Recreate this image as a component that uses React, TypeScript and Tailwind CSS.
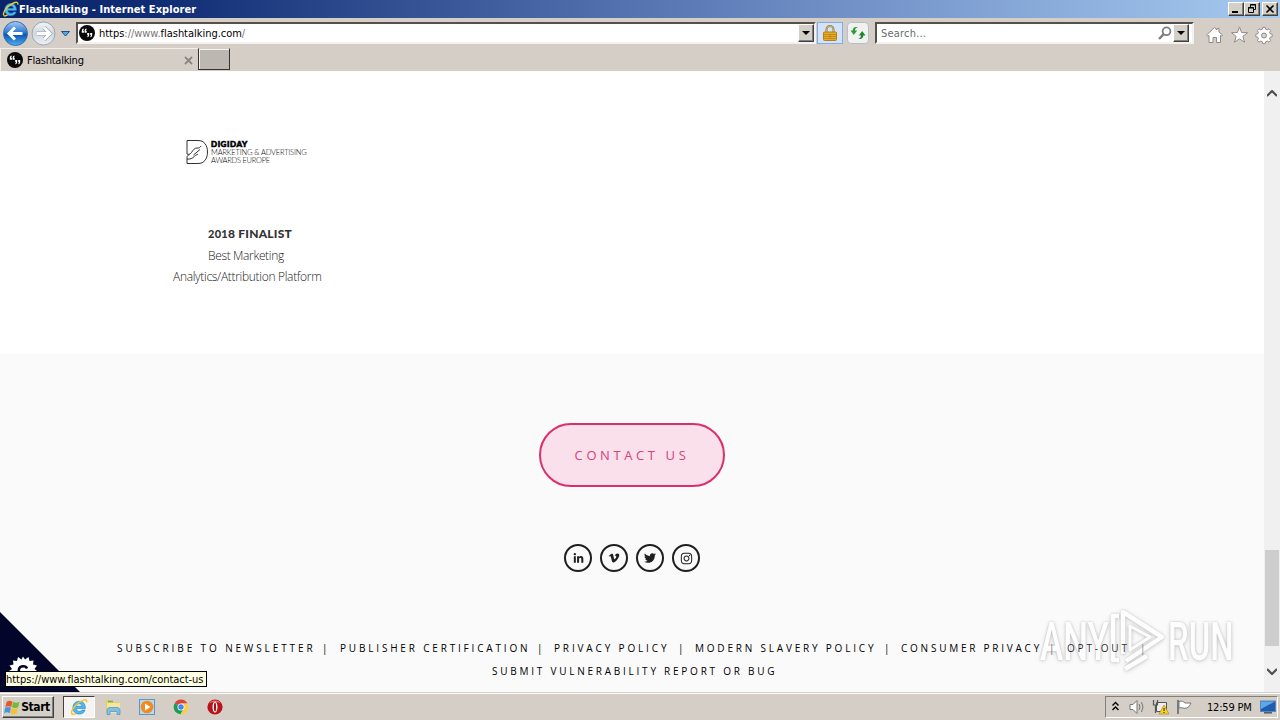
import React from "react";
import { FaLinkedinIn, FaVimeoV, FaTwitter, FaInstagram } from "react-icons/fa";

const UI = "font-['DejaVu_Sans_Condensed','DejaVu_Sans',sans-serif] whitespace-nowrap";

function IELogo({ className }: { className: string }) {
  return (
    <svg viewBox="0 0 18 18" className={className}>
      <path d="M15.300 10.600H6.200c.2 2 1.500 2.800 3.300 2.800 1.300 0 2.100-.5 2.600-1.300h2.900c-.8 2.600-2.900 4-5.700 4-3.800 0-6.400-2.600-6.400-6.400 0-3.700 2.600-6.500 6.400-6.500 4 0 6.200 2.900 6 7.400zM6.300 8.300h5.700c-.2-1.700-1.200-2.500-2.700-2.500-1.700 0-2.700.9-3 2.500z" fill="#4fb8f0" stroke="#1c78bd" strokeWidth=".6" />
      <path d="M16.700 4.500c.5-2.200-.8-3.200-3.200-2.400C8.500 3.700 2.500 9.500 1.600 13.700c-.6 3 1.400 3.300 4.400 1.600" fill="none" stroke="#f2c62c" strokeWidth="1.500" />
    </svg>
  );
}

function QuoteMark({ className }: { className: string }) {
  return (
    <svg viewBox="0 0 16 16" className={className}>
      <circle cx="8" cy="8" r="8" fill="#080808" />
      <path d="M2.800 7.800V6c0-1.400.7-2.200 1.900-2.400v1.200c-.4.200-.6.400-.6.900h.8v2.100zM5.600 7.800V6c0-1.400.7-2.200 1.900-2.400v1.200c-.4.200-.6.400-.6.900h.8v2.100zM8.200 8h2v1.800c0 1.400-.6 2.200-1.800 2.500v-1.200c.3-.2.500-.4.500-1h-.7zM11.200 8h2v1.800c0 1.400-.6 2.200-1.800 2.500v-1.200c.3-.2.500-.4.500-1h-.7z" fill="#fff" />
    </svg>
  );
}

function RaisedButton({ children, className }: { children: React.ReactNode; className: string }) {
  return (
    <div className={`flex shrink-0 items-center justify-center border border-t-white border-l-white border-r-[#404040] border-b-[#404040] bg-[#d4d0c8] shadow-[inset_-1px_-1px_0_#808080] ${className}`}>
      {children}
    </div>
  );
}

function DropArrow() {
  return (
    <svg viewBox="0 0 8 4" className="h-1 w-2">
      <path d="M0 0h8L4 4z" fill="#000" />
    </svg>
  );
}

function TitleBar() {
  return (
    <div className="flex h-[18px] shrink-0 items-center bg-[linear-gradient(90deg,#0a246a_0%,#0f2c74_12%,#6483bd_58%,#a6caf0_100%)] pl-[2px] pr-[2px]">
      <IELogo className="h-[18px] w-[17px]" />
      <span className="whitespace-nowrap pt-[2px] font-['DejaVu_Sans_Condensed','DejaVu_Sans',sans-serif] text-[11px] font-bold tracking-[0.05px] text-white">
        Flashtalking - Internet Explorer
      </span>
      <div className="ml-auto flex">
        <RaisedButton className="h-[14px] w-4">
          <svg viewBox="0 0 12 10" className="h-[10px] w-3"><path d="M2 7h6v2H2z" /></svg>
        </RaisedButton>
        <RaisedButton className="h-[14px] w-4">
          <svg viewBox="0 0 12 10" className="h-[10px] w-3" fill="none" stroke="#000"><path d="M4.500 3.500v-3h5v5h-2M4 1h6M2.500 3.500h5v5h-5zM2 4h6" /></svg>
        </RaisedButton>
        <RaisedButton className="ml-[2px] h-[14px] w-4">
          <svg viewBox="0 0 12 10" className="h-[10px] w-3"><path d="M2.500 1.500l7 7M9.500 1.500l-7 7" stroke="#000" strokeWidth="1.600" /></svg>
        </RaisedButton>
      </div>
    </div>
  );
}

function NavButtons() {
  return (
    <svg viewBox="0 0 76 30" className="h-[30px] w-[76px] shrink-0">
      <defs>
        <linearGradient id="back" x1="0" y1="0" x2="0" y2="1">
          <stop offset="0" stopColor="#a9cdf2" />
          <stop offset=".45" stopColor="#2f79d0" />
          <stop offset=".55" stopColor="#0c55b5" />
          <stop offset="1" stopColor="#4cb0f0" />
        </linearGradient>
        <linearGradient id="fwd" x1="0" y1="0" x2="0" y2="1">
          <stop offset="0" stopColor="#f4f6f8" />
          <stop offset=".5" stopColor="#cfd6df" />
          <stop offset="1" stopColor="#f0f3f6" />
        </linearGradient>
      </defs>
      <circle cx="15.500" cy="15.500" r="12" fill="url(#back)" stroke="#3a6eae" />
      <path d="M15 9.500l-6 6 6 6M9.500 15.500h13" fill="none" stroke="#fff" strokeWidth="3" />
      <circle cx="43.500" cy="15.500" r="11.500" fill="url(#fwd)" stroke="#9aa5b4" />
      <path d="M44 9.500l6 6-6 6M49.500 15.500h-13" fill="none" stroke="#98a1ae" strokeWidth="4" />
      <path d="M44 9.500l6 6-6 6M49.500 15.500h-13" fill="none" stroke="#fff" strokeWidth="2.800" />
      <path d="M61.500 13.500h8l-4 4.500z" fill="#53a9e0" stroke="#1b4f8c" />
    </svg>
  );
}

function AddressRow() {
  return (
    <div className="flex h-[30px] shrink-0 items-start">
      <NavButtons />
      <div className="mt-1 flex h-[22px] w-[740px] shrink-0 items-center border-2 border-t-[#55504c] border-l-[#55504c] border-r-[#f4f2ef] border-b-[#f4f2ef] bg-white pl-px">
        <QuoteMark className="h-4 w-4" />
        <span className={`${UI} ml-1 pt-[3px] text-[11px] tracking-[-0.03px] text-[#777]`}>
          <span className="text-black">https</span>://www.<span className="text-black">flashtalking.com</span>/
        </span>
        <RaisedButton className="ml-auto h-[18px] w-4">
          <DropArrow />
        </RaisedButton>
      </div>
      <div className="ml-px mt-1 flex h-[22px] w-[26px] shrink-0 items-center justify-center border border-[#7fadea] bg-[#d2e3fb]">
        <svg viewBox="0 0 14 16" className="h-4 w-[14px]">
          <path d="M3.500 8V4.500a3.500 3.500 0 0 1 7 0V8" fill="none" stroke="#99742c" strokeWidth="2" />
          <path d="M3.500 8V4.500a3.500 3.500 0 0 1 7 0V8" fill="none" stroke="#e8d28c" strokeWidth=".7" />
          <rect x=".5" y="7" width="13" height="8.500" rx="1" fill="#e5ab25" stroke="#b67e15" />
          <path d="M1 9.500h12M1 11.500h12M1 13.500h12M7 9v5" stroke="#bd8418" strokeWidth=".8" />
        </svg>
      </div>
      <div className="ml-1 mt-1 flex h-[22px] w-[22px] shrink-0 items-center justify-center rounded-sm border border-[#b4bfcb] bg-[#f0f2f1]">
        <svg viewBox="0 0 16 14" className="h-[14px] w-4">
          <path d="M8 1.500C5.600 1.500 5 3 5 4.500h2.200L3.800 9 .5 4.500h2.200C2.700 1.700 5 .3 8 1.500z" fill="#2f9a35" />
          <path d="M8 12.500c2.400 0 3-1.500 3-3H8.800L12.200 5l3.300 4.500h-2.200c0 2.800-2.300 4.200-5.300 3z" fill="#21862a" />
        </svg>
      </div>
      <div className="ml-[6px] mt-1 flex h-[22px] w-[319px] shrink-0 items-center border-2 border-t-[#55504c] border-l-[#55504c] border-r-[#f4f2ef] border-b-[#f4f2ef] bg-white pl-1 pr-[3px]">
        <span className={`${UI} pt-[3px] text-[11px] tracking-[0.2px] text-[#6b6b6b]`}>Search...</span>
        <svg viewBox="0 0 14 14" className="ml-auto mr-px h-[14px] w-[14px]">
          <circle cx="8.500" cy="5.300" r="3.900" fill="none" stroke="#7d7d7d" strokeWidth="1.800" />
          <path d="M5.700 8.200L1 13" stroke="#7d7d7d" strokeWidth="2.400" />
        </svg>
        <RaisedButton className="h-[18px] w-4">
          <DropArrow />
        </RaisedButton>
      </div>
      <svg viewBox="0 0 70 20" className="ml-[11px] mt-[7px] h-5 w-[70px] shrink-0" fill="#fff" stroke="#8f8b88" strokeLinejoin="round">
        <path d="M1.500 10L9.500 2.500l2.500 2.400V3.500h2V7l3.500 3-1 1.200-1-.7v7h-4v-5H8v5H4v-7l-1.300.8z" />
        <path d="M34.500 2l2.100 5.500 5.900.2-4.600 3.700 1.600 5.800-5-3.300-5 3.300 1.600-5.800-4.600-3.700 5.900-.2z" />
        <path d="M57.800 2.300h2.400l.5 2 1.500.6 1.800-1.100 1.700 1.700-1.100 1.800.6 1.500 2 .5v2.400l-2 .5-.6 1.500 1.100 1.800-1.700 1.700-1.800-1.100-1.500.6-.5 2h-2.400l-.5-2-1.500-.6-1.800 1.100-1.700-1.700 1.100-1.800-.6-1.500-2-.5V9.300l2-.5.6-1.500-1.100-1.800L54 3.800l1.800 1.100 1.500-.6z" />
        <circle cx="59" cy="10.500" r="2.500" fill="#d5cfc9" />
      </svg>
    </div>
  );
}

function TabRow() {
  return (
    <div className="flex h-[23px] shrink-0 items-start">
      <div className="flex h-[23px] w-[198px] items-center border-l border-t border-[#f2efeb] pl-[6px] pr-[5px]">
        <QuoteMark className="h-4 w-4" />
        <span className={`${UI} ml-1 pt-[2px] text-[11px] tracking-[-0.25px] text-black`}>Flashtalking</span>
        <svg viewBox="0 0 9 9" className="ml-auto h-[9px] w-[9px]">
          <path d="M1 1l7 7M8 1L1 8" stroke="#8b8682" strokeWidth="1.800" />
        </svg>
      </div>
      <div className="h-[22px] w-8 border border-b-[#353230] border-l-[#353230] border-r-[#353230] border-t-[#d5cfc9] bg-[#bdb7b1] shadow-[inset_1px_1px_0_#f4f2ef]" />
    </div>
  );
}

function DigidayLogo() {
  return (
    <div className="flex h-[26px] items-start">
      <svg viewBox="0 0 24 26" className="h-[26px] w-6 shrink-0" fill="none" stroke="#1a1a1a" strokeWidth=".9">
        <path d="M1 11V1.500H12c6 0 9.500 4.500 9.500 11.500S18 24.500 12 24.500H1v-6c0-1.500 1-2.500 2.500-2.700" />
        <path d="M1 11v4c1.500.8 3.500.2 4.500-1.500 1.500-2.500 3-4.500 5.500-4.500 2 .2 3.200-.6 4-2" />
        <path d="M1 20c3 .5 5.500-.5 7.500-2.800 1.200-1.400 2.500-1.200 3.500-2.200M7.500 16l6.500-5.500" />
      </svg>
      <div className="whitespace-nowrap pl-px pt-px font-['Lato',sans-serif] text-[7.500px] leading-[8.700px] text-black">
        <div className="text-[8px] font-black tracking-[0.550px] text-black [-webkit-text-stroke:0.6px_black]">DIGIDAY</div>
        <div className="font-light tracking-[-0.17px]">MARKETING &amp; ADVERTISING</div>
        <div className="font-light tracking-[-0.25px]">AWARDS EUROPE</div>
      </div>
    </div>
  );
}

const SOCIAL = [FaLinkedinIn, FaVimeoV, FaTwitter, FaInstagram];

function FooterLinks() {
  return (
    <div className="relative z-10 whitespace-nowrap font-['Open_Sans','Noto_Sans',sans-serif] text-[10px] leading-[23px] text-black">
      <div className="flex pl-[117px]">
        <span className="w-[205px] tracking-[2.900px]">SUBSCRIBE TO NEWSLETTER</span>
        <span className="w-[18px]">|</span>
        <span className="w-[197px] tracking-[2.820px]">PUBLISHER CERTIFICATION</span>
        <span className="w-[17px]">|</span>
        <span className="w-[124px] tracking-[2.850px]">PRIVACY POLICY</span>
        <span className="w-[17px]">|</span>
        <span className="w-[189px] tracking-[2.800px]">MODERN SLAVERY POLICY</span>
        <span className="w-[17px]">|</span>
        <span className="w-[148px] tracking-[2.760px]">CONSUMER PRIVACY</span>
        <span className="w-[18px] text-black/60">|</span>
        <span className="w-[73px] tracking-[2.800px] text-black/85">OPT-OUT</span>
        <span className="text-black/50">|</span>
      </div>
      <div className="pl-[492px] tracking-[2.760px]">SUBMIT VULNERABILITY REPORT OR BUG</div>
    </div>
  );
}

function Watermark() {
  return (
    <div className="absolute left-[1040px] top-[534px] flex h-[74px] w-[200px] items-center font-['Roboto','Liberation_Sans',sans-serif] text-[#fdfdfd] [filter:drop-shadow(0_0_1px_rgba(0,0,0,.16))_drop-shadow(0_1px_2px_rgba(0,0,0,.16))]">
      <div className="w-[68px] shrink-0">
        <span className="inline-block origin-left scale-x-[0.66] text-[53px] font-medium leading-none">ANY</span>
      </div>
      <svg viewBox="0 0 60 70" className="h-[70px] w-[60px] shrink-0" fill="none" stroke="currentColor" strokeWidth="4.500" strokeLinejoin="round">
        <path d="M15 47V5l39 25L18 54" />
        <path d="M22 33V19l20 11-20 13z" strokeWidth="3" />
        <path d="M11 9H5v44h6M17 62l22-13" />
      </svg>
      <div className="w-[66px] shrink-0">
        <span className="inline-block origin-left scale-x-[0.62] text-[53px] font-medium leading-none">RUN</span>
      </div>
    </div>
  );
}

function Page() {
  return (
    <div className="relative flex h-[621px] shrink-0 overflow-hidden bg-white">
      <div className="flex w-[1264px] shrink-0 flex-col">
        <div className="h-[283px] shrink-0 pl-[172px] pt-[68px]">
          <div className="pl-[14px]">
            <DigidayLogo />
          </div>
          <div className="mt-[58px] w-[150px] whitespace-nowrap text-[12px] leading-[21px]">
            <div className="pl-9 font-['Lato',sans-serif] text-[12px] font-black tracking-[0.25px] text-[#333]">
              <span className="text-[11px]">201</span>8 FINALIST
            </div>
            <div className="pl-9 pt-px font-['Open_Sans',sans-serif] font-light tracking-[-0.35px] text-[#222]">Best Marketing</div>
            <div className="pl-px font-['Open_Sans',sans-serif] font-light tracking-[-0.310px] text-[#222]">Analytics/Attribution Platform</div>
          </div>
        </div>
        <div className="flex flex-1 flex-col bg-[#fafafa] pt-[69px]">
          <div className="ml-[539px] flex h-16 w-[186px] items-center justify-center rounded-full border-2 border-[#d92f6b] bg-[#f9e0ea] pt-[2px] font-['Open_Sans',sans-serif] text-[13px] tracking-[3.600px] text-[#d4437a]">
            CONTACT US
          </div>
          <div className="ml-[564px] mt-[57px] flex gap-2">
            {SOCIAL.map((Icon, i) => (
              <div key={i} className="flex h-7 w-7 items-center justify-center rounded-full border-2 border-[#1f1f1f] text-[#1f1f1f]">
                <Icon className={i === 0 ? "h-[11px] w-[11px]" : i === 3 ? "h-[13px] w-[13px]" : "h-3 w-3"} />
              </div>
            ))}
          </div>
          <div className="mt-[65px]">
            <FooterLinks />
          </div>
        </div>
      </div>
      <div className="flex w-4 flex-col items-center bg-[#f0f0f0]">
        <svg viewBox="0 0 10 7" className="mt-[19px] h-[7px] w-[10px]"><path d="M0 6l5-5 5 5" fill="none" stroke="#505050" strokeWidth="2.200" /></svg>
        <div className="mt-[453px] h-24 w-[14px] bg-[#cdcdcd]" />
        <svg viewBox="0 0 10 7" className="mt-[22px] h-[7px] w-[10px]"><path d="M0 1l5 5 5-5" fill="none" stroke="#505050" strokeWidth="2.200" /></svg>
      </div>

      <svg viewBox="0 0 80 80" className="absolute bottom-0 left-0 h-20 w-20">
        <path d="M0 0l80 80H0z" fill="#03052a" />
        <path d="M23 44.500l2 3 3.500-2.500 1 4 4-.5-.5 4 4 1-2.500 3.500L37 59l-3 2 2 3.500-4 1H14l-4-1 2-3.500L9 59l3-2L9.500 53.500l4-1-.5-4 4 .5 1-4 3.500 2.500z" fill="#fff" />
        <path d="M27 56.500c-1-3-7-3-8 .5s2 4.500 5 4h3v-2" fill="none" stroke="#03052a" strokeWidth="2.500" />
      </svg>
      <div className={`${UI} absolute left-[5px] top-[600px] z-20 flex h-4 w-[202px] items-center border border-black bg-[#ffffe1] pt-[2px] text-[11px] tracking-[-0.04px] text-black`}>
        https://www.flashtalking.com/contact-us
      </div>
      <Watermark />
    </div>
  );
}

function WindowsFlag() {
  return (
    <svg viewBox="0 0 16 16" className="h-[17px] w-[17px] shrink-0">
      <path d="M2.500 2.500C4.500 1.300 6 1.500 8 2.500L6.800 7.500C5 6.600 3.500 6.500 1.300 7.500z" fill="#e8582b" />
      <path d="M8.600 2.800c2 1 4 1 6-.1l-1.300 5c-2 1-3.800 1-5.800 0z" fill="#76b83c" />
      <path d="M1.100 8.300c2-1 3.700-.9 5.500 0l-1.200 5C3.600 12.300 2 12.400 0 13.300z" fill="#4a95da" />
      <path d="M7.300 8.600c2 1 3.800 1 5.800 0l-1.300 5c-2 1-3.800.9-5.700-.1z" fill="#f5c12e" />
    </svg>
  );
}

function Taskbar() {
  return (
    <div className="flex h-7 shrink-0 items-start border-t border-[#d4d0c8] bg-[#d5cec7] pt-[3px] shadow-[inset_0_1px_0_#fff]">
      <RaisedButton className="ml-[2px] h-[22px] w-[52px] pr-[2px]">
        <WindowsFlag />
        <span className="font-['DejaVu_Sans_Condensed','DejaVu_Sans',sans-serif] text-[12px] font-bold tracking-[-0.450px] text-black">Start</span>
      </RaisedButton>
      <div className="ml-[9px] flex h-[22px] w-8 shrink-0 items-center justify-center border border-b-white border-l-[#404040] border-r-white border-t-[#404040] bg-[#f6f4f2]">
        <IELogo className="h-[18px] w-[18px]" />
      </div>
      <svg viewBox="0 0 18 18" className="ml-[9px] mt-[2px] h-[18px] w-[18px] shrink-0">
        <path d="M2 2h5l1 2h7v10H2z" fill="#e9cc68" />
        <path d="M3 5h13v10H3z" fill="#f7e59a" />
        <path d="M3 16.500v-4c0-2 1-3 3-3h7c2 0 3 1 3 3v4h-3v-3H6v3z" fill="#7cc0e6" stroke="#4b93c4" strokeWidth=".7" />
        <path d="M4 3.500h5" stroke="#5fb95d" strokeWidth="1.500" />
      </svg>
      <svg viewBox="0 0 18 18" className="ml-4 mt-[2px] h-[18px] w-[18px] shrink-0">
        <rect x="1.500" y="1.500" width="15" height="15" fill="#b7d8f3" stroke="#5d94c9" />
        <circle cx="9" cy="9" r="6.300" fill="#f38b1b" />
        <path d="M7 5.500v7l5.500-3.500z" fill="#fff" />
      </svg>
      <svg viewBox="0 0 18 18" className="ml-4 mt-[2px] h-[18px] w-[18px] shrink-0">
        <path d="M9 9L2.700 5.300A7.200 7.200 0 0 1 15.400 5.500H9z" fill="#db4437" />
        <path d="M2.700 5.300A7.200 7.200 0 0 0 8.500 16.200L12 10.500 9 9z" fill="#1b9d58" />
        <path d="M15.400 5.500A7.200 7.200 0 0 1 8.500 16.200L12 10.500 12 7 9 5.500z" fill="#fdce44" />
        <circle cx="9" cy="9" r="3.500" fill="#fff" />
        <circle cx="9" cy="9" r="2.700" fill="#4285f4" />
      </svg>
      <svg viewBox="0 0 18 18" className="ml-4 mt-[2px] h-[18px] w-[18px] shrink-0">
        <circle cx="9" cy="9" r="7.600" fill="#b81318" />
        <path d="M3 5.500C5 1.500 13 1.500 15 5.500c-3-2-9-2-12 0z" fill="#ea6a68" />
        <ellipse cx="9" cy="9" rx="2.500" ry="5.600" fill="#fff" />
        <ellipse cx="9" cy="9" rx="1.100" ry="4.600" fill="#a50e14" />
      </svg>
      <div className="ml-auto mr-[2px] flex h-[22px] w-[173px] items-center border border-b-white border-l-[#808080] border-r-white border-t-[#808080]">
        <svg viewBox="0 0 90 20" className="h-5 w-[90px] shrink-0">
          <path d="M6.500 8.500L9.500 5.500l3 3M6.500 13l3-3 3 3" fill="none" stroke="#000" strokeWidth="1.400" />
          <path d="M24 7.500h3l4-4v13l-4-4h-3z" fill="#fff" stroke="#777" />
          <path d="M33 7q2 3 0 6M35.500 5q3 5 0 10" fill="none" stroke="#777" />
          <path d="M50.500 5.500h10v9h-10z" fill="#eee" stroke="#555" />
          <path d="M47.500 3v5h4V3M49.500 8v8" fill="none" stroke="#555" strokeWidth="1.200" />
          <path d="M58 8l5 9H53z" fill="#f8d22a" stroke="#b28c10" strokeWidth=".7" />
          <path d="M58 11v3M58 15v1" stroke="#222" />
          <path d="M72 3v14" stroke="#666" strokeWidth="1.600" />
          <path d="M73 4.500c3-1 4 0 6 1.500h6c-1 2-2 4-4 5-3 1-5-1-8 0z" fill="#fff" stroke="#777" />
        </svg>
        <span className={`${UI} ml-[11px] pt-[2px] text-[11px] tracking-[-0.2px] text-black`}>12:59 PM</span>
        <svg viewBox="0 0 16 14" className="ml-auto mr-px h-[14px] w-4">
          <rect x=".5" y="1" width="15" height="10.500" fill="#1e5db0" stroke="#5f84b5" />
          <path d="M1 1.500h14L1 9z" fill="#5ea7ea" />
          <path d="M4 12.800h8" stroke="#56616f" strokeWidth="1.600" />
        </svg>
      </div>
    </div>
  );
}

export default function App() {
  return (
    <div className="flex h-[720px] w-[1280px] flex-col overflow-hidden bg-[#d5cec7]">
      <TitleBar />
      <AddressRow />
      <TabRow />
      <Page />
      <Taskbar />
    </div>
  );
}
